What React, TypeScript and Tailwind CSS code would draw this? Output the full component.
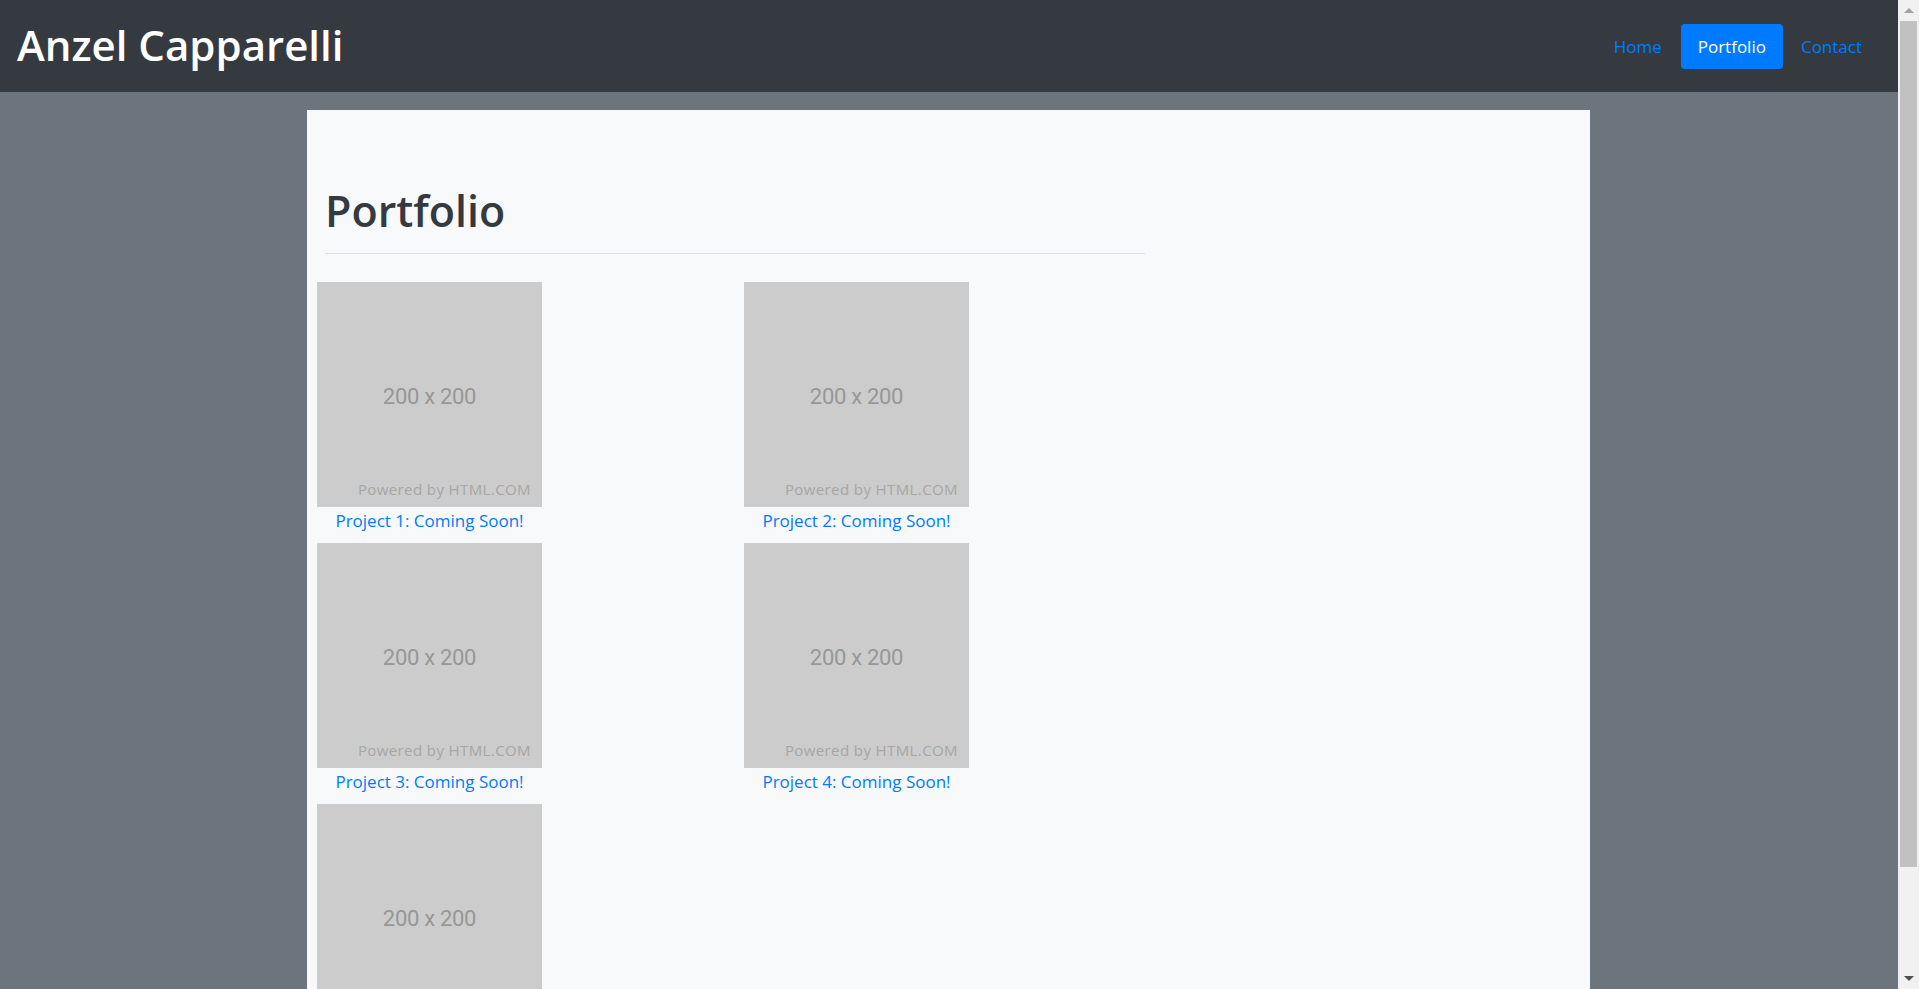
import React from 'react';

const PROJECTS = [
  'Project 1: Coming Soon!',
  'Project 2: Coming Soon!',
  'Project 3: Coming Soon!',
  'Project 4: Coming Soon!',
  'Project 5: Coming Soon!',
];

const sans = { fontFamily: '"Open Sans", "Noto Sans", sans-serif' };

function Placeholder() {
  return (
    <div className="relative w-[225px] h-[225px] bg-[#cccccc] flex items-center justify-center">
      <span className="pt-[4px] text-[22px] text-[#979797] font-['Roboto',Arial,sans-serif] tracking-[-0.3px]">200 x 200</span>
      <span className="absolute right-[11px] bottom-[7px] text-[15px] tracking-[0.4px] text-[#a6a6a6] font-['Open_Sans',sans-serif]">
        Powered by HTML.COM
      </span>
    </div>
  );
}

function ProjectCard({ title }: { title: string }) {
  return (
    <div className="w-[427px] pl-[10px]">
      <div className="w-[225px] flex flex-col items-center">
        <Placeholder />
        <a href="#" className="h-[36px] leading-[27px] text-[17px] text-[#007bff] whitespace-nowrap">
          {title}
        </a>
      </div>
    </div>
  );
}

function Scrollbar() {
  return (
    <div className="w-[21px] h-full bg-[#f1f1f1] flex flex-col items-center">
      <div className="h-[21px] w-full flex items-center justify-center">
        <div className="w-0 h-0 border-l-[5px] border-r-[5px] border-b-[5px] border-l-transparent border-r-transparent border-b-[#a3a3a3]" />
      </div>
      <div className="w-[17px] h-[846px] bg-[#c1c1c1]" />
      <div className="flex-1" />
      <div className="h-[21px] w-full flex items-center justify-center">
        <div className="w-0 h-0 border-l-[5px] border-r-[5px] border-t-[5px] border-l-transparent border-r-transparent border-t-[#505050]" />
      </div>
    </div>
  );
}

export default function App() {
  const rows: string[][] = [];
  for (let i = 0; i < PROJECTS.length; i += 2) rows.push(PROJECTS.slice(i, i + 2));

  return (
    <div className="flex w-full h-[989px] overflow-hidden" style={sans}>
      <div className="flex-1 flex flex-col bg-[#6c757d] min-w-0">
        {/* Navbar */}
        <header className="h-[92px] shrink-0 bg-[#343a40] flex items-center justify-between pl-[17px] pr-[18px]">
          <h1 className="text-[42px] font-semibold text-white leading-none pb-[2px]">Anzel Capparelli</h1>
          <nav className="flex items-center text-[17px]">
            <a href="#" className="px-[19px] h-[45px] leading-[45px] text-[#007bff]">Home</a>
            <a href="#" className="px-[17px] h-[45px] leading-[45px] rounded-[4px] bg-[#007bff] text-white">Portfolio</a>
            <a href="#" className="px-[18px] h-[45px] leading-[45px] text-[#007bff]">Contact</a>
          </nav>
        </header>

        {/* Content */}
        <main className="flex-1 pt-[18px] min-h-0 pr-[1px]">
          <div className="mx-auto w-[1283px] h-full bg-[#f8f9fa]">
            <div className="pl-[18px] pt-[74px]">
              <h2 className="text-[43px] font-semibold text-[#343a40] leading-[54px]">Portfolio</h2>
              <hr className="mt-[15px] w-[820px] border-0 border-t border-[#dcdfe3]" />
            </div>
            <div className="pt-[28px] flex flex-col">
              {rows.map((row, i) => (
                <div key={i} className="flex">
                  {row.map((p) => (
                    <ProjectCard key={p} title={p} />
                  ))}
                </div>
              ))}
            </div>
          </div>
        </main>
      </div>
      <Scrollbar />
    </div>
  );
}
